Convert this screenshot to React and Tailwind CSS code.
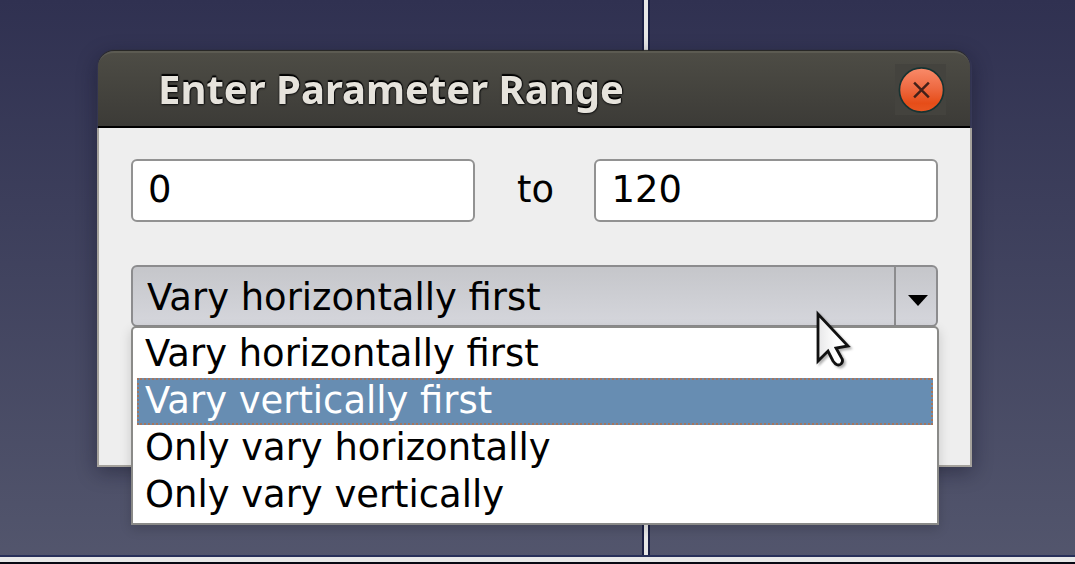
const options = [
  'Vary horizontally first',
  'Vary vertically first',
  'Only vary horizontally',
  'Only vary vertically',
];

function Field({ value }) {
  return (
    <div className="flex h-[63px] w-[343.5px] items-center rounded-[6px] border-2 border-[#929292] bg-white pl-[15px] leading-none">
      <span>{value}</span>
    </div>
  );
}

function TitleBar() {
  return (
    <header className="flex h-[77px] items-center justify-between rounded-t-[16px] border-t-2 border-b-2 border-t-[#5c5b52] border-b-black bg-linear-to-b from-[#4d4c45] to-[#3c3b37] pr-[24px] pl-[60px] shadow-[0_-1px_1px_#292823]">
      <h1 className="origin-left scale-x-[1.04] whitespace-nowrap font-['Noto_Sans','Open_Sans',sans-serif] text-[38.5px] leading-none font-bold text-[#e6e3dc] [text-shadow:0_-2px_1px_#000,0_1px_2px_#111,1px_0_1px_#111]">
        Enter Parameter Range
      </h1>
      <button className="flex size-[51px] items-center justify-center bg-[#44433e]" aria-label="Close">
        <svg viewBox="0 0 52 52" className="size-[51px]">
          <defs>
            <linearGradient id="closeFill" x1="0" y1="0" x2="0" y2="1">
              <stop offset="0" stopColor="#f98b6a" />
              <stop offset="0.45" stopColor="#ee6a42" />
              <stop offset="0.8" stopColor="#e64d18" />
              <stop offset="1" stopColor="#e95723" />
            </linearGradient>
          </defs>
          <circle cx="27" cy="26.5" r="22.5" fill="url(#closeFill)" stroke="#183332" strokeWidth="1.7" />
          <path d="M19.5 19l15 15M34.5 19l-15 15" fill="none" stroke="#422019" strokeWidth="2.5" />
        </svg>
      </button>
    </header>
  );
}

function Options() {
  return (
    <ul className="absolute top-[61px] left-0 h-[199px] w-[808px] rounded-t-[5px] border-2 border-[#8a8a88] bg-white pt-[3px] shadow-[0_4px_12px_rgba(0,0,0,0.16)]">
      {options.map((label, i) => (
        <li
          key={label}
          className={
            i === 1
              ? 'mx-[4px] flex h-[47px] items-center border-2 border-dotted border-[#a5755d] bg-[#678db2] pl-[6px] leading-none text-white'
              : 'mx-[4px] flex h-[47px] items-center pl-[8px] leading-none'
          }
        >
          <span className="-mt-px">{label}</span>
        </li>
      ))}
    </ul>
  );
}

export default function App() {
  return (
    <main className="relative h-[564px] w-full overflow-hidden bg-linear-to-b from-[#303151] to-[#53566d] pt-[51px] pl-[97px] font-['DejaVu_Sans',sans-serif] text-[36.9px] text-black">
      <div className="absolute top-0 left-[642px] h-full w-[8px] border-x-2 border-[#1b2045] bg-[#e6e6e6]" />
      <div className="absolute top-[555px] left-0 h-[9px] w-full border-t-2 border-b-2 border-t-[#28305a] border-b-[#080914] bg-[#e8e8e8]" />
      <section className="relative w-[875px] rounded-t-[16px] shadow-[0_5px_20px_rgba(12,12,30,0.4)]">
        <div className="w-[874px] px-px">
          <TitleBar />
        </div>
        <div className="h-[339px] border-2 border-t-0 border-[#a5a29c] bg-[#eeeeee] px-[32px] pt-[31px]">
          <div className="flex items-center justify-between">
            <Field value="0" />
            <span className="pl-[2px] leading-none">to</span>
            <Field value="120" />
          </div>
          <div className="relative mt-[43px]">
            <div className="flex h-[62px] items-stretch rounded-[6px] border-2 border-[#8c8c8e] bg-linear-to-b from-[#c5c6ca] to-[#d5d6dc]">
              <div className="flex flex-1 items-center pt-[5px] pl-[14px] leading-none">
                <span>{options[0]}</span>
              </div>
              <div className="flex w-[42px] items-center justify-center border-l-2 border-[#8c8c8e] pt-[8px] pl-[3px]">
                <svg viewBox="0 0 20 11" className="h-[11px] w-[20px]">
                  <path d="M0 0H20L10 11Z" fill="#000" />
                </svg>
              </div>
            </div>
            <Options />
          </div>
        </div>
      </section>
      <svg className="absolute top-[308px] left-[813px] h-[64px] w-[42px] drop-shadow-[2px_2px_1px_rgba(0,0,0,0.3)]" viewBox="0 0 42 64">
        <defs>
          <linearGradient id="pointerFill" x1="0" y1="0" x2="1" y2="0">
            <stop offset="0" stopColor="#e7e7e8" />
            <stop offset="0.6" stopColor="#fff" />
          </linearGradient>
        </defs>
        <path d="M5 6V53L15 43L20 53Q24 59 28 56Q31 53 28 49L23 40L35 38Z" fill="url(#pointerFill)" stroke="#111" strokeWidth="2.8" />
      </svg>
    </main>
  );
}
